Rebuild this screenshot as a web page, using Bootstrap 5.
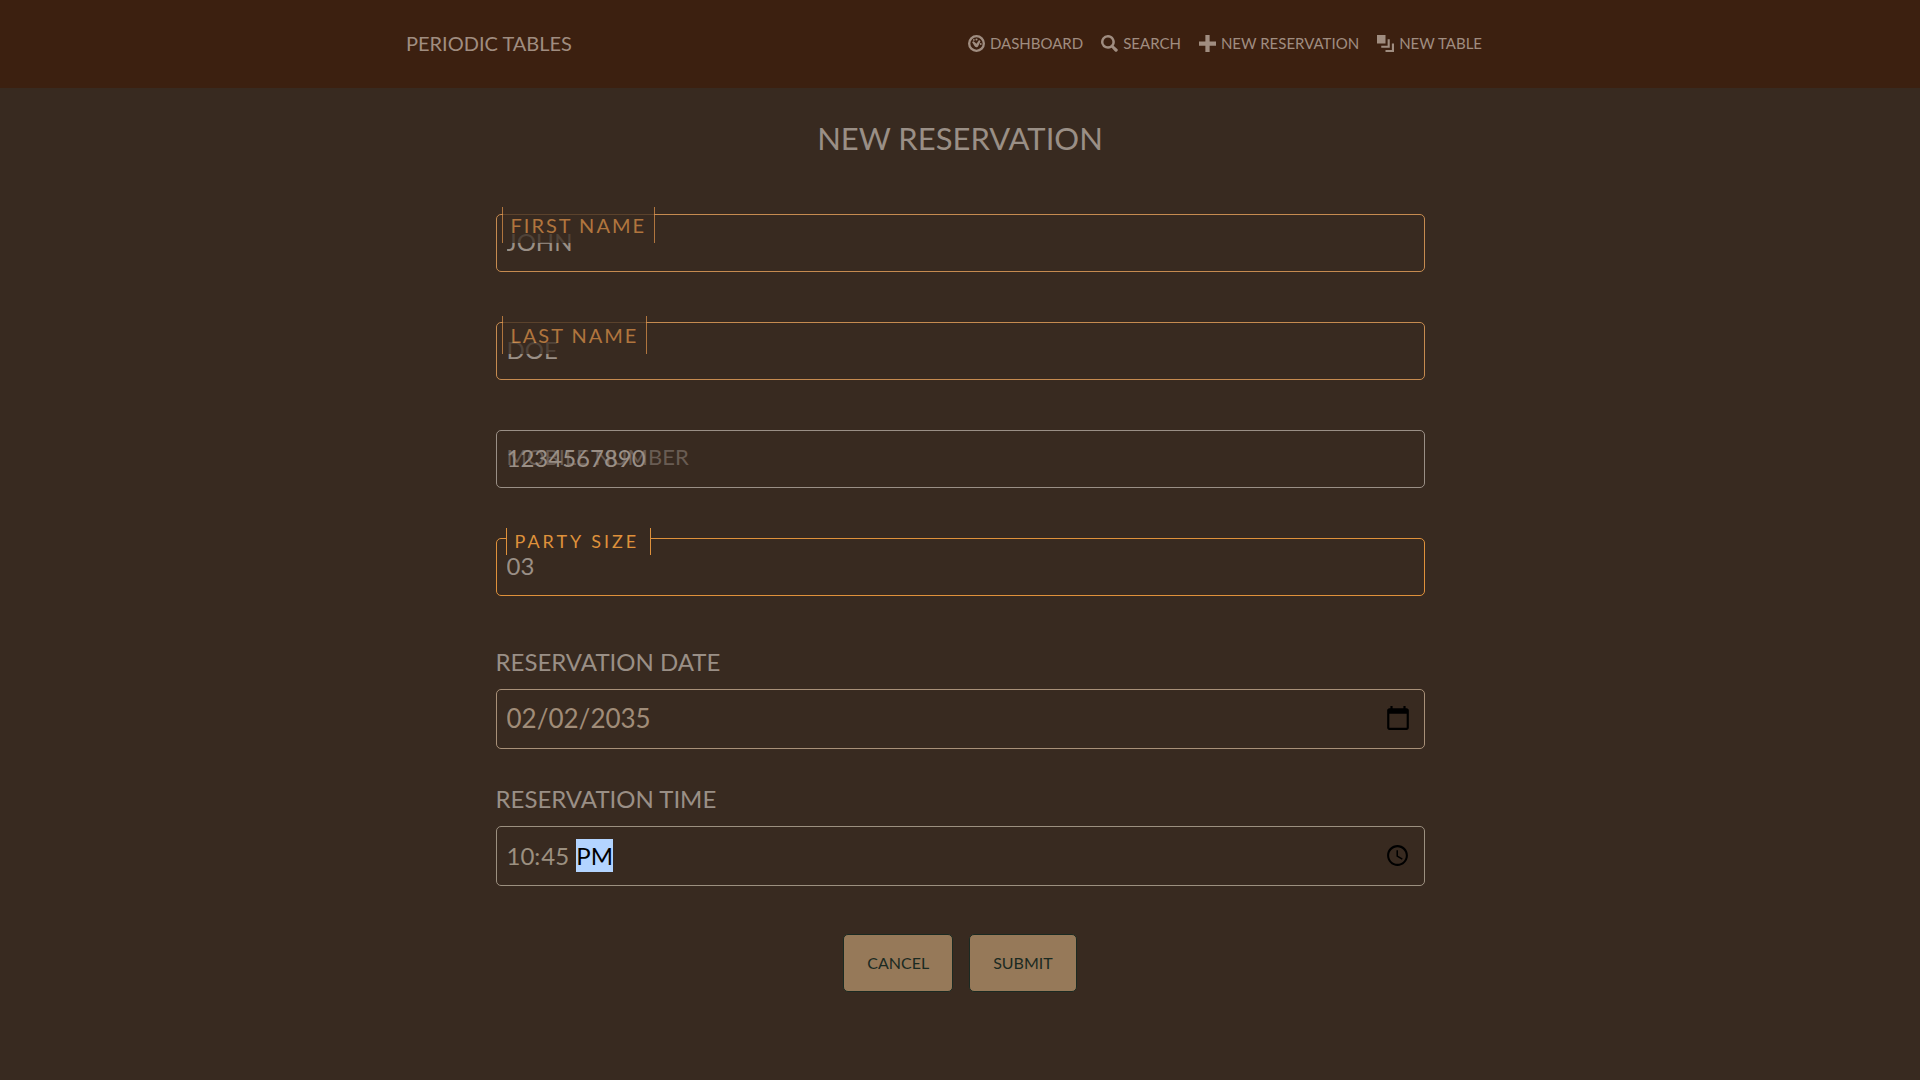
<!DOCTYPE html>
<html lang="en">
<head>
<meta charset="utf-8">
<meta name="viewport" content="width=device-width, initial-scale=1">
<title>Periodic Tables</title>
<link href="https://cdn.jsdelivr.net/npm/bootstrap@5.3.0/dist/css/bootstrap.min.css" rel="stylesheet">
<style>
  body { background: #382a20; color: #9a8f86; font-family: Lato, sans-serif; text-transform: uppercase; }
  .site-bar { background: #3c2010; min-height: 88px; }
  .site-bar .container { max-width: 1140px; padding: 0 48px 2px 16px; }
  .site-bar a { color: #a08d80; }
  .site-bar .navbar-brand { font-size: 20px; }
  .site-bar .navbar-nav { gap: 18px; }
  .site-bar .nav-link { font-size: 15px; line-height: 24px; gap: 5px; }
  .site-bar svg { width: 17px; height: 17px; fill: currentColor; }
  .page-title { font-size: 31px; line-height: 40px; padding-top: 30px; margin-bottom: 56px; }
  .booking { max-width: 953px; }
  .booking .form-control { height: 58px; padding: 0 10px 4px; font-size: 24px; color: #9a8f86; background: transparent; border: 1px solid #9a8f86; border-radius: 5px; text-transform: uppercase; }
  .field { margin-bottom: 50px; }
  .booking .filled { border-color: #c68b50; }
  .booking .active-field { border-color: #df913b; }
  .float-tag { position: absolute; top: 13px; left: 11px; font-size: 22px; line-height: 28px; opacity: .5; pointer-events: none; }
  .float-tag.rising { top: -7px; left: 6px; padding: 0 8px; font-size: 20px; line-height: 36px; letter-spacing: 2px; color: #d88f48; background: #382a20; border: solid #d88f48; border-width: 0 1px; opacity: .75; }
  .float-tag.rising.early { top: -6px; line-height: 38px; }
  .float-tag.raised { top: -10px; left: 10px; padding: 0 11px 0 8px; font-size: 18px; line-height: 27px; letter-spacing: 3px; color: #df913b; background: #382a20; border: solid #df913b; border-width: 0 1px; opacity: 1; }
  .picker label { font-size: 24px; line-height: 32px; margin-bottom: 11px; }
  .booking .picker .form-control { height: 60px; padding-bottom: 1px; }
  .picker { margin-bottom: 34px; }
  .booking .picker .date-box { font-size: 26px; color: #a08c78; border-color: #a89078; }
  .booking .picker .time-box { color: #9c9080; border-color: #9c9080; }
  .time-box::-webkit-datetime-edit-ampm-field { padding: 2px 0; background: #b3d4ff; color: #000; }
  .date-box::-webkit-calendar-picker-indicator { width: 28px; height: 28px; }
  .actions { padding-top: 14px; }
  .action { font-size: 16px; line-height: 24px; padding: 16px 23px; color: #1b2a22; background: #967959; border: 1px solid #1b2a22; border-radius: 5px; text-transform: uppercase; }
</style>
<script src="https://cdn.jsdelivr.net/npm/bootstrap@5.3.0/dist/js/bootstrap.bundle.min.js"></script>
</head>
<body>
<nav class="navbar navbar-expand site-bar p-0">
  <div class="container">
    <a class="navbar-brand m-0" href="#">Periodic Tables</a>
    <ul class="navbar-nav">
      <li class="nav-item"><a class="nav-link p-0 d-flex align-items-center" href="#">
        <svg viewBox="0 0 16 16" aria-hidden="true"><path fill-rule="evenodd" d="M8 0a8 8 0 1 1 0 16A8 8 0 0 1 8 0zm0 2.200a5.800 5.800 0 1 0 0 11.600A5.800 5.800 0 0 0 8 2.200z"/><path d="M3.800 6.600 5.200 5.800 8 8.200 10.400 4.800l1.400 1-2 4.200c-.8 2-3 2-3.800.2z"/><circle cx="8" cy="4.200" r="1"/><circle cx="5.500" cy="4.600" r=".8"/><circle cx="12" cy="8.500" r=".9"/></svg>Dashboard</a></li>
      <li class="nav-item"><a class="nav-link p-0 d-flex align-items-center" href="#">
        <svg viewBox="0 0 16 16" aria-hidden="true"><path fill-rule="evenodd" d="M6.500 0a6.500 6.500 0 0 1 5.400 10.100l3.700 3.200c.8 1.400-1 3.200-2.400 2.300l-3.200-3.600A6.500 6.500 0 1 1 6.500 0zm0 2.300a4.200 4.200 0 1 0 0 8.400 4.200 4.200 0 0 0 0-8.400z"/></svg>Search</a></li>
      <li class="nav-item"><a class="nav-link p-0 d-flex align-items-center" href="#">
        <svg viewBox="0 0 16 16" aria-hidden="true"><path d="M6 0h4v6h6v4h-6v6H6v-6H0V6h6z"/></svg>New Reservation</a></li>
      <li class="nav-item"><a class="nav-link p-0 d-flex align-items-center" href="#">
        <svg viewBox="0 0 16 16" aria-hidden="true"><path d="M0 0h8v8H0zM10 4h2v8H4v-2h6zM14 8h2v8H8v-2h6z"/></svg>New Table</a></li>
    </ul>
  </div>
</nav>
<main class="container booking">
  <h1 class="page-title text-center fw-normal">New Reservation</h1>
  <form>
    <div class="field position-relative">
      <input class="form-control filled" id="first" type="text" value="John">
      <label class="float-tag rising" for="first">First Name</label>
    </div>
    <div class="field position-relative">
      <input class="form-control filled" id="last" type="text" value="Doe">
      <label class="float-tag rising early" for="last">Last Name</label>
    </div>
    <div class="field position-relative">
      <input class="form-control" id="mobile" type="tel" value="1234567890">
      <label class="float-tag" for="mobile">Mobile Number</label>
    </div>
    <div class="field position-relative">
      <input class="form-control active-field" id="party" type="text" inputmode="numeric" value="03">
      <label class="float-tag raised" for="party">Party Size</label>
    </div>
    <div class="picker">
      <label class="d-block" for="date">Reservation Date</label>
      <input class="form-control date-box" id="date" type="date" value="2035-02-02">
    </div>
    <div class="picker">
      <label class="d-block" for="time">Reservation Time</label>
      <input class="form-control time-box" id="time" type="time" value="22:45">
    </div>
    <div class="actions d-flex justify-content-center gap-3">
      <button class="action" type="button">Cancel</button>
      <button class="action" type="submit">Submit</button>
    </div>
  </form>
</main>
</body>
</html>
